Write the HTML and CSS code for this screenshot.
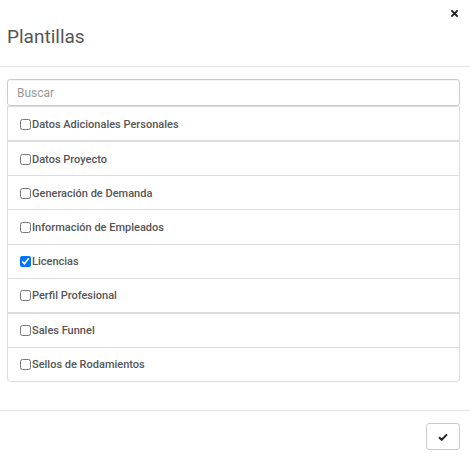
FILE: index.html
```html
<!DOCTYPE html>
<html lang="es">
<head>
<meta charset="utf-8">
<title>Plantillas</title>
<link rel="stylesheet" href="styles.css">
</head>
<body>
<div class="modal">
  <div class="modal-header">
    <div class="close-row">
      <button class="close" aria-label="Cerrar">
        <svg width="7" height="7" viewBox="0 0 7 7"><path d="M1 1L6 6M6 1L1 6" stroke="#222" stroke-width="1.8" stroke-linecap="square"/></svg>
      </button>
    </div>
    <h4 class="title">Plantillas</h4>
  </div>
  <div class="modal-body">
    <input class="search" type="text" placeholder="Buscar">
    <ul class="list">
      <li class="item"><label><input type="checkbox"> Datos Adicionales Personales</label></li>
      <li class="item thick"><label><input type="checkbox"> Datos Proyecto</label></li>
      <li class="item"><label><input type="checkbox"> Generación de Demanda</label></li>
      <li class="item"><label><input type="checkbox"> Información de Empleados</label></li>
      <li class="item"><label><input type="checkbox" checked> Licencias</label></li>
      <li class="item"><label><input type="checkbox"> Perfil Profesional</label></li>
      <li class="item thick"><label><input type="checkbox"> Sales Funnel</label></li>
      <li class="item"><label><input type="checkbox"> Sellos de Rodamientos</label></li>
    </ul>
  </div>
  <div class="modal-footer">
    <button class="ok" aria-label="Aceptar">
      <svg width="10" height="8" viewBox="0 0 10 8"><path d="M1 4.2L3.7 6.8L9 1.4" fill="none" stroke="#222" stroke-width="2"/></svg>
    </button>
  </div>
</div>
</body>
</html>
```
FILE: styles.css
```css
* { box-sizing: border-box; }
html, body { margin: 0; padding: 0; background: #fff; }
body { font-family: Roboto, "Liberation Sans", sans-serif; color: #555; }
.modal { width: 470px; }
.modal-header {
  height: 67px;
  border-bottom: 1px solid #e5e5e5;
  display: flex;
  flex-direction: column;
}
.close-row { display: flex; justify-content: flex-end; padding: 10px 12px 0 0; height: 22px; }
.close { border: 0; background: none; padding: 0; width: 7px; height: 7px; display: flex; }
.title {
  margin: 0;
  padding: 0 0 0 7px;
  font-size: 19px;
  font-weight: 400;
  line-height: 21px;
  color: #555;
  margin-top: 4px;
}
.modal-body { padding: 12px 10px 0 7px; }
.search {
  display: block;
  width: 100%;
  height: 27px;
  border: 1px solid #ccc;
  border-radius: 3px;
  padding: 0 9px;
  font-family: Roboto, "Liberation Sans", sans-serif;
  font-size: 12px;
  color: #555;
  box-shadow: inset 0 1px 1px rgba(0,0,0,0.05);
  outline: none;
}
.search::placeholder { color: #999; }
.list {
  list-style: none;
  margin: 0;
  padding: 0;
  border: 1px solid #ddd;
  border-top: 0;
  border-radius: 0 0 4px 4px;
}
.item {
  height: 34.125px;
  border-top: 1px solid #ddd;
  display: flex;
  align-items: center;
  padding: 1px 12px 0 12px;
}
.item.thick { border-top-width: 2px; height: 35.125px; }
.item label {
  display: flex;
  align-items: center;
  font-size: 11px;
  font-weight: 500;
  color: #555;
}
.item input {
  width: 11px;
  height: 11px;
  margin: 0 1px 0 0;
}
.modal-footer {
  margin-top: 28px;
  border-top: 1px solid #e5e5e5;
  padding: 12px 10px 0 0;
  display: flex;
  justify-content: flex-end;
}
.ok {
  width: 34px;
  height: 27px;
  border: 1px solid #ccc;
  border-radius: 3px;
  background: #fff;
  display: flex;
  align-items: center;
  justify-content: center;
  padding: 0;
}
```
